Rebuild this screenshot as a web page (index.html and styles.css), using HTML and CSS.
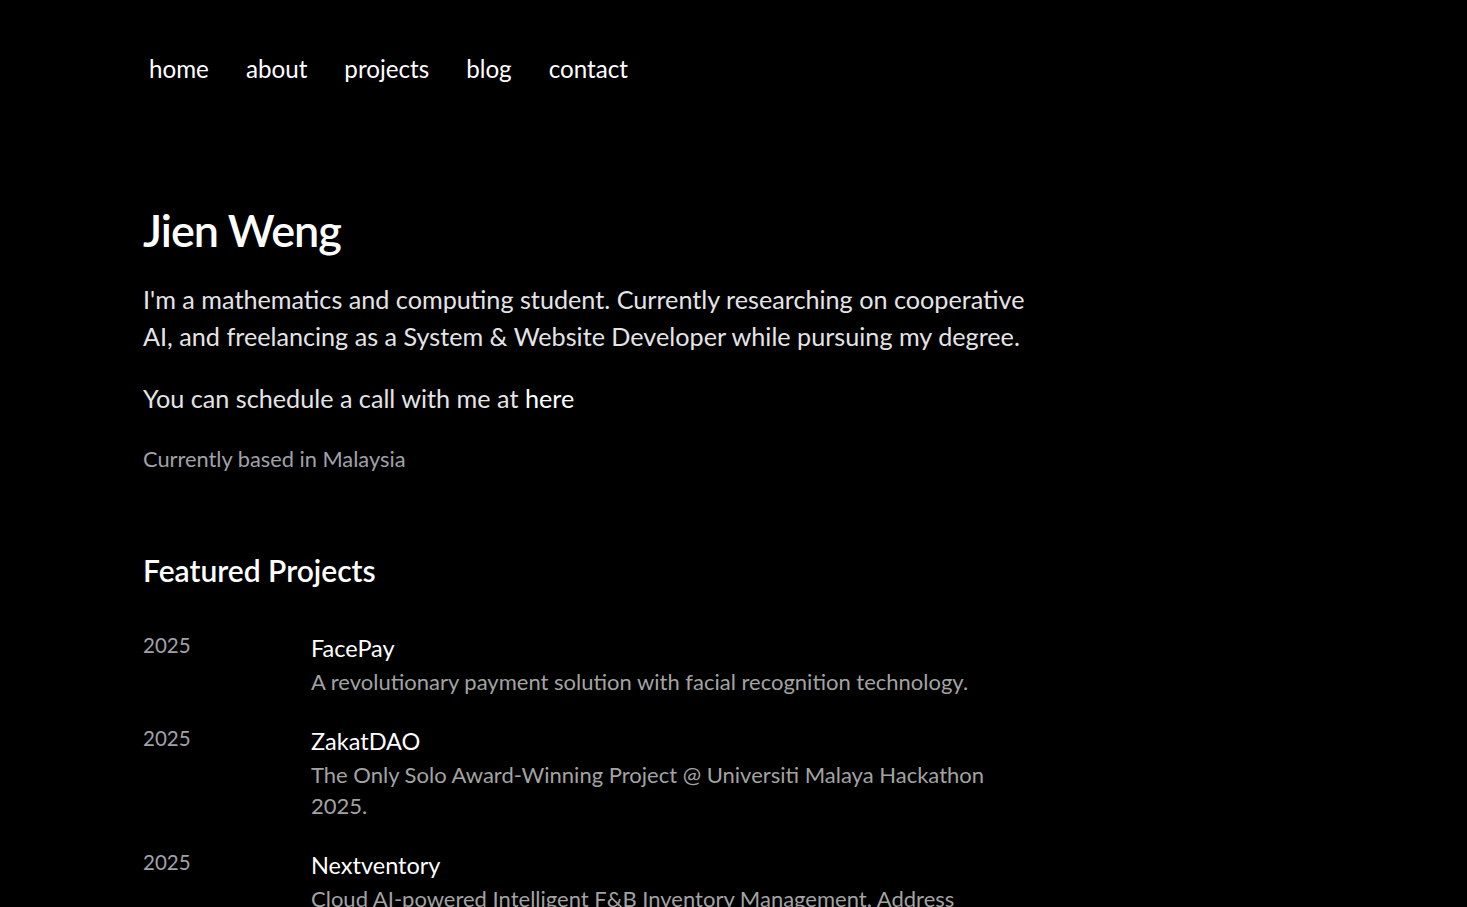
FILE: index.html
```html
<!DOCTYPE html>
<html lang="en">
<head>
<meta charset="utf-8">
<title>Jien Weng</title>
<link rel="stylesheet" href="styles.css">
</head>
<body>
<div class="page">
  <nav class="nav">
    <a href="#">home</a>
    <a href="#">about</a>
    <a href="#">projects</a>
    <a href="#">blog</a>
    <a href="#">contact</a>
  </nav>
  <main class="main">
    <h1 class="name">Jien Weng</h1>
    <p class="intro">I'm a mathematics and computing student. Currently researching on cooperative AI, and freelancing as a System &amp; Website Developer while pursuing my degree.</p>
    <p class="intro">You can schedule a call with me at <a class="link" href="#">here</a></p>
    <p class="based">Currently based in Malaysia</p>

    <h2 class="section-title">Featured Projects</h2>
    <ul class="projects">
      <li class="project">
        <span class="year">2025</span>
        <div class="info">
          <div class="title">FacePay</div>
          <div class="desc">A revolutionary payment solution with facial recognition technology.</div>
        </div>
      </li>
      <li class="project">
        <span class="year">2025</span>
        <div class="info">
          <div class="title">ZakatDAO</div>
          <div class="desc">The Only Solo Award-Winning Project @ Universiti Malaya Hackathon 2025.</div>
        </div>
      </li>
      <li class="project">
        <span class="year">2025</span>
        <div class="info">
          <div class="title">Nextventory</div>
          <div class="desc">Cloud AI-powered Intelligent F&amp;B Inventory Management. Address food waste and inventory issues for restaurants.</div>
        </div>
      </li>
    </ul>
  </main>
</div>
</body>
</html>
```

FILE: styles.css
```css
html, body {
  margin: 0;
  padding: 0;
  background: #000;
  color: #e4e4e7;
  font-family: "Lato", "Open Sans", sans-serif;
}

.page {
  padding: 0 0 0 143px;
  width: 888px;
}

.nav {
  display: flex;
  gap: 37px;
  padding: 47px 0 0 6px;
  height: 42px;
  align-items: center;
}

.nav a {
  color: #fff;
  text-decoration: none;
  font-size: 24.2px;
}

.main {
  padding-top: 111px;
}

.name {
  margin: 0 0 21px;
  font-size: 45px;
  font-weight: 600;
  color: #fff;
  letter-spacing: -1px;
  line-height: 60px;
}

.intro {
  margin: 0 0 25px;
  font-size: 25.2px;
  line-height: 37px;
  color: #e4e4e7;
}

.link {
  color: #fff;
  text-decoration: none;
}

.based {
  margin: 27px 0 0;
  font-size: 21.8px;
  line-height: 30px;
  color: #a1a1aa;
}

.section-title {
  margin: 76px 0 40px;
  font-size: 30px;
  font-weight: 600;
  color: #fff;
  line-height: 40px;
}

.projects {
  list-style: none;
  margin: 0;
  padding: 0;
  display: flex;
  flex-direction: column;
  gap: 26px;
}

.project {
  display: grid;
  grid-template-columns: 168px 1fr;
}

.info {
  max-width: 690px;
}

.year {
  font-size: 20.5px;
  color: #a1a1aa;
  line-height: 30px;
}

.title {
  font-size: 23.5px;
  color: #fff;
  line-height: 36px;
}

.desc {
  font-size: 22px;
  color: #a3a3a3;
  line-height: 31px;
}
```
